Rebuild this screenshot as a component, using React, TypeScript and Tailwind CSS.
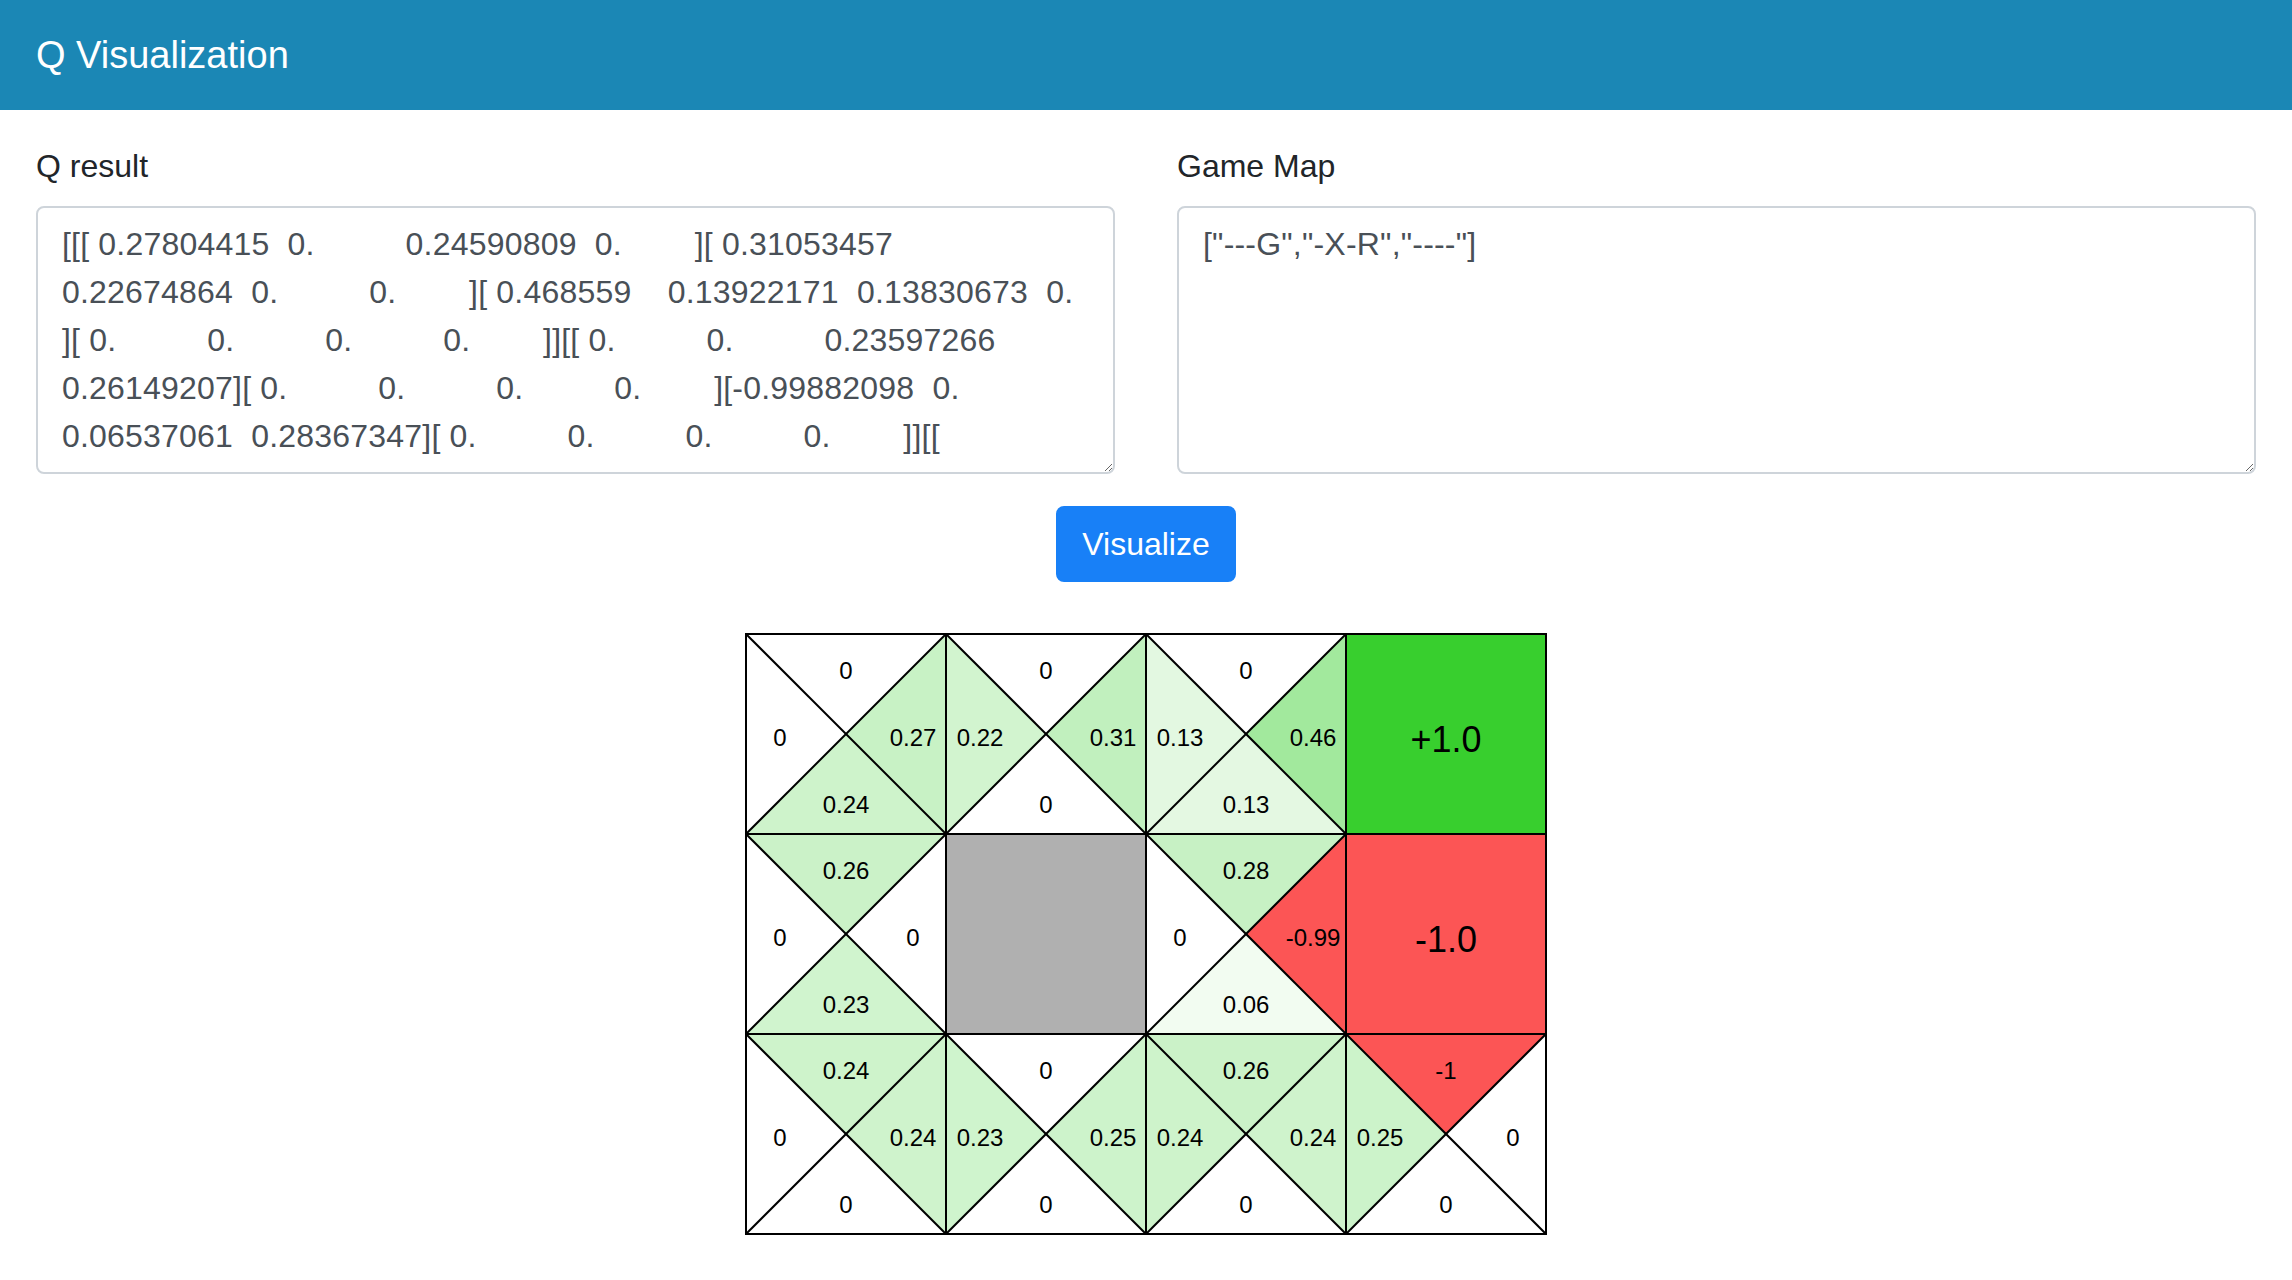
import React from "react";

// Q values per cell: [right, left, down, up]
type Cell =
  | { kind: "q"; q: [number, number, number, number] }
  | { kind: "wall" }
  | { kind: "goal"; reward: number };

const board: Cell[][] = [
  [
    { kind: "q", q: [0.27804415, 0, 0.24590809, 0] },
    { kind: "q", q: [0.31053457, 0.22674864, 0, 0] },
    { kind: "q", q: [0.468559, 0.13922171, 0.13830673, 0] },
    { kind: "goal", reward: 1 },
  ],
  [
    { kind: "q", q: [0, 0, 0.23597266, 0.26149207] },
    { kind: "wall" },
    { kind: "q", q: [-0.99882098, 0, 0.06537061, 0.28367347] },
    { kind: "goal", reward: -1 },
  ],
  [
    { kind: "q", q: [0.24351227, 0, 0, 0.24807436] },
    { kind: "q", q: [0.25140518, 0.23812309, 0, 0] },
    { kind: "q", q: [0.24205634, 0.24539132, 0, 0.26294151] },
    { kind: "q", q: [0, 0.25362479, 0, -1] },
  ],
];

const qText = [
  "[[[ 0.27804415  0.          0.24590809  0.        ][ 0.31053457",
  "0.22674864  0.          0.        ][ 0.468559    0.13922171  0.13830673  0.",
  "][ 0.          0.          0.          0.        ]][[ 0.          0.          0.23597266",
  "0.26149207][ 0.          0.          0.          0.        ][-0.99882098  0.",
  "0.06537061  0.28367347][ 0.          0.          0.          0.        ]][[",
  "[ 0.24351227  0.          0.          0.24807436][ 0.25140518  0.23812309",
  "0.          0.        ][ 0.24205634  0.24539132  0.          0.26294151][ 0.",
  "0.25362479  0.         -1.        ]]]",
].join("\n");

const S = 200;

function fmt(v: number) {
  if (v === 0) return "0";
  return String(Math.trunc(v * 100) / 100);
}

function fillFor(v: number) {
  if (v > 0) return `rgba(56,207,46,${Math.min(v, 1)})`;
  if (v < 0) return `rgba(252,85,85,${Math.min(-v, 1)})`;
  return "#ffffff";
}

function QGrid() {
  const fills: React.ReactNode[] = [];
  const lines: React.ReactNode[] = [];
  const labels: React.ReactNode[] = [];

  board.forEach((row, r) =>
    row.forEach((cell, c) => {
      const x = c * S;
      const y = r * S;
      const cx = x + S / 2;
      const cy = y + S / 2;
      const key = `${r}-${c}`;

      if (cell.kind === "wall") {
        fills.push(<rect key={key} x={x} y={y} width={S} height={S} fill="#b0b0b0" />);
      } else if (cell.kind === "goal") {
        fills.push(
          <rect key={key} x={x} y={y} width={S} height={S} fill={cell.reward > 0 ? "#38cf2e" : "#fc5555"} />
        );
        labels.push(
          <text key={key} x={cx} y={cy + 5} fontSize={36} textAnchor="middle" dominantBaseline="central">
            {cell.reward > 0 ? "+1.0" : "-1.0"}
          </text>
        );
      } else {
        const [right, left, down, up] = cell.q;
        const tris: [string, number][] = [
          [`${x},${y} ${x + S},${y} ${cx},${cy}`, up],
          [`${x + S},${y} ${x + S},${y + S} ${cx},${cy}`, right],
          [`${x},${y + S} ${x + S},${y + S} ${cx},${cy}`, down],
          [`${x},${y} ${x},${y + S} ${cx},${cy}`, left],
        ];
        tris.forEach(([pts, v], i) =>
          fills.push(<polygon key={`${key}-${i}`} points={pts} fill={fillFor(v)} />)
        );
        lines.push(
          <line key={`${key}-d1`} x1={x} y1={y} x2={x + S} y2={y + S} stroke="#000" strokeWidth={2} />,
          <line key={`${key}-d2`} x1={x + S} y1={y} x2={x} y2={y + S} stroke="#000" strokeWidth={2} />
        );
        const pos: [number, number, number][] = [
          [cx, y + 36, up],
          [x + 167, cy + 3, right],
          [cx, y + 170, down],
          [x + 34, cy + 3, left],
        ];
        pos.forEach(([tx, ty, v], i) =>
          labels.push(
            <text key={`${key}-t${i}`} x={tx} y={ty} fontSize={24} textAnchor="middle" dominantBaseline="central">
              {fmt(v)}
            </text>
          )
        );
      }
      lines.push(
        <rect key={`${key}-b`} x={x} y={y} width={S} height={S} fill="none" stroke="#000" strokeWidth={2} />
      );
    })
  );

  return (
    <svg width={804} height={604} viewBox="-2 -2 804 604" fontFamily="'Liberation Sans', Arial, sans-serif">
      {fills}
      {lines}
      {labels}
    </svg>
  );
}

export default function App() {
  return (
    <div className="min-h-screen bg-white font-['Liberation_Sans',Arial,sans-serif] text-[#212529]">
      <header className="h-[110px] bg-[#1b87b5] flex items-center px-[36px]">
        <span className="text-[38px] text-white leading-none">Q Visualization</span>
      </header>

      <main className="px-[36px] pt-[32px]">
        <div className="grid grid-cols-2 gap-x-[62px]">
          <div>
            <label className="block text-[32px] leading-[48px] mb-[16px]">Q result</label>
            <textarea
              rows={5}
              defaultValue={qText}
              className="block w-full h-[268px] border-2 border-[#ced4da] rounded-[8px] px-[24px] py-[12px] text-[32px] leading-[48px] tracking-[0.2px] text-[#495057] whitespace-pre overflow-hidden outline-none"
            />
          </div>
          <div>
            <label className="block text-[32px] leading-[48px] mb-[16px]">Game Map</label>
            <textarea
              rows={5}
              defaultValue={'["---G","-X-R","----"]'}
              className="block w-full h-[268px] border-2 border-[#ced4da] rounded-[8px] px-[24px] py-[12px] text-[32px] leading-[48px] tracking-[0.2px] text-[#495057] overflow-hidden outline-none"
            />
          </div>
        </div>

        {/* Visualize button */}
        <div className="flex justify-center mt-[32px]">
          <button className="h-[76px] px-[24px] border-2 border-[#1880f7] bg-[#1880f7] rounded-[8px] text-white text-[32px] leading-[48px]">
            Visualize
          </button>
        </div>

        <div className="flex justify-center mt-[50px]">
          <QGrid />
        </div>
      </main>
    </div>
  );
}
